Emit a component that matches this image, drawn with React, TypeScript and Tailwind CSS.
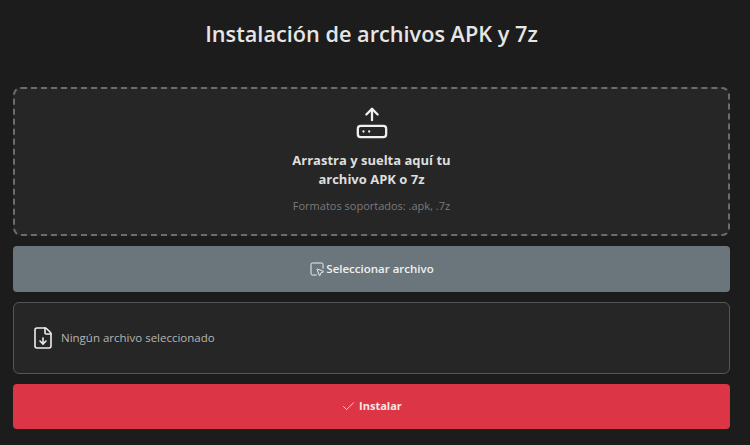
import { Check, FileDown, HardDriveUpload, SquareMousePointer } from 'lucide-react'

export default function App() {
  return (
    <main className="flex h-[445px] w-[750px] flex-col overflow-hidden bg-[#1c1c1c] pl-[13px] pr-[20px] font-['Open_Sans','Noto_Sans',sans-serif]">
      <h1 className="flex h-[87px] items-start justify-center pt-[19px] text-[21.7px] font-semibold leading-[30px] text-[#e6e6e6]">
        Instalación de archivos APK y 7z
      </h1>

      <section className="flex h-[149px] flex-col items-center rounded-[8px] border-2 border-dashed border-[#6c6c6c] bg-[#262626] pt-[17px]">
        <HardDriveUpload className="h-[34px] w-[34px] text-[#f0f0f0]" strokeWidth={1.6} />
        <p className="mt-[11px] text-center text-[13px] font-bold leading-[19px] text-[#dedede]">
          Arrastra y suelta aquí tu
          <br />
          archivo APK o 7z
        </p>
        <p className="mt-[9px] text-[11px] leading-[16px] text-[#7a7a7a]">Formatos soportados: .apk, .7z</p>
      </section>

      <button
        type="button"
        className="mt-[10px] flex h-[46px] items-center justify-center gap-[1px] rounded-[4px] bg-[#6b767c] text-[11.5px] font-semibold text-[#eef0f1]"
      >
        <SquareMousePointer className="h-[16px] w-[16px]" strokeWidth={1.5} />
        Seleccionar archivo
      </button>

      <div className="mt-[10px] flex h-[72px] items-center gap-[6px] rounded-[6px] border border-[#555555] bg-[#262626] pl-[17px]">
        <FileDown className="h-[24px] w-[24px] text-[#eeeeee]" strokeWidth={1.6} />
        <span className="text-[11.5px] text-[#b5b5b5]">Ningún archivo seleccionado</span>
      </div>

      <button
        type="button"
        className="mt-[10px] flex h-[45px] items-center justify-center gap-[3px] rounded-[4px] bg-[#dc3545] text-[11px] font-bold text-[#f8e6e8]"
      >
        <Check className="h-[15px] w-[15px]" strokeWidth={1.4} />
        Instalar
      </button>
    </main>
  )
}
